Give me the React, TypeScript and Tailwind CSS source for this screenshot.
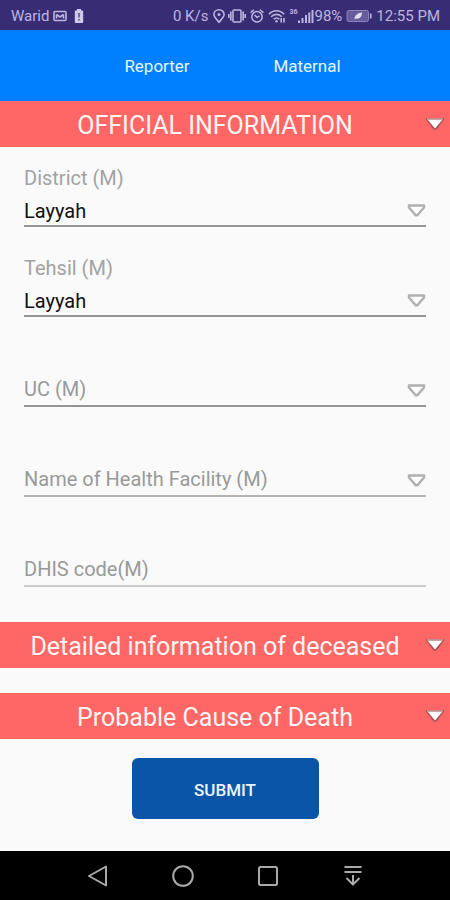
import type { ReactNode } from "react";

function StatusBar() {
  return (
    <header className="flex h-[30px] items-center justify-between bg-[#382d74] pl-[11px] pr-[10px] pt-0.5 text-[15px] leading-5 text-[#bdb5e0]">
      <div className="flex items-center">
        <span>Warid</span>
        <svg className="ml-1 h-3 w-3.5" viewBox="0 0 14 12" fill="none" stroke="currentColor" strokeWidth="1.6">
          <rect x="1" y="1.5" width="12" height="9" rx="1" />
          <path d="M3.5 8.5V4.500M10.500 8.500V4.500M3.500 4.500 7 7l3.500-2.500" />
        </svg>
        <svg className="ml-[7px] h-3.5 w-2.5" viewBox="0 0 10 14">
          <path d="M3 0h4v1.500h1.200a1 1 0 0 1 1 1V13a1 1 0 0 1-1 1H1.800a1 1 0 0 1-1-1V2.500a1 1 0 0 1 1-1H3z" fill="#cfc9ea" />
          <path d="M5 4v4.500M5 10v1.600" stroke="#5b5191" strokeWidth="1.6" />
        </svg>
      </div>
      <div className="flex items-center">
        <span>0 K/s</span>
        <svg className="ml-1 h-3.5 w-3.5" viewBox="0 0 14 14" fill="none" stroke="currentColor" strokeWidth="1.6">
          <path d="M7 13.200C4.500 10.300 1.900 8 1.900 5.500a5.100 4.700 0 0 1 10.200 0C12.100 8 9.500 10.300 7 13.200z" />
          <circle cx="7" cy="5.600" r="1.500" fill="currentColor" stroke="none" />
        </svg>
        <svg className="ml-0.5 h-3.5 w-[18px]" viewBox="0 0 18 14" fill="none" stroke="currentColor" strokeWidth="1.6">
          <rect x="5" y="1" width="8" height="12" rx="1" />
          <path d="M2.800 2.500v9M15.200 2.500v9M.8 5v4M17.200 5v4" />
        </svg>
        <svg className="ml-1 h-3.5 w-3.5" viewBox="0 0 14 14" fill="none" stroke="currentColor" strokeWidth="1.5">
          <circle cx="7" cy="7.800" r="5.200" />
          <path d="M.6 3.600 3.900.8M13.400 3.600 10.100.8M4.600 6 7 8.300l2.500-1.500" />
        </svg>
        <svg className="ml-1 h-3.5 w-[18px]" viewBox="0 0 18 14" fill="none" stroke="currentColor" strokeWidth="1.6">
          <path d="M1 5.200C5 .6 12 .6 16 5.200M3.200 7.800c3-3.300 7.600-3.300 10.600 0M5.600 10.300c1.800-1.800 4-1.800 5.800 0" />
          <circle cx="8.500" cy="12.300" r="1.200" fill="currentColor" stroke="none" />
          <path d="M13.200 9v4.500M16 9v4.500" />
        </svg>
        <span className="ml-[3px] self-start text-[7px] font-bold leading-3">36</span>
        <svg className="h-3.5 w-4" viewBox="0 0 16 14" fill="currentColor">
          <path d="M0 11.500h2V14H0zM3.500 9h2v5h-2zM7 6h2v8H7zM10.300 3.500h2V14h-2zM13.500 1h2v13h-2z" />
        </svg>
        <span className="ml-px">98%</span>
        <svg className="ml-1 h-3.5 w-[26px]" viewBox="0 0 26 14">
          <rect x="1" y="1.500" width="21.500" height="11" rx="2" fill="#665c9b" stroke="#8d84bb" />
          <path d="M24 4.500h1.500v5H24z" fill="#bdb5e0" />
          <path d="M8.500 10.500c0-4 2.500-6.500 7.500-7-.2 4.500-2.500 7-6 6z" fill="#e2deef" />
        </svg>
        <span className="ml-1">12:55 PM</span>
      </div>
    </header>
  );
}

function SectionHeader({ children }: { children: ReactNode }) {
  return (
    <h2>
      <button type="button" className="flex h-[46px] w-full items-center bg-[#ff6766] pl-1 pr-1.5 text-[25px] leading-8 text-[#fff5f2]">
        <span className="flex-1 pt-1 text-center">{children}</span>
        <svg className="h-3.5 w-[18px] shrink-0" viewBox="0 0 18 14">
          <path d="M0 1h18v1.500l-7 9.500q-2 2-4 0L0 2.500z" fill="#a65453" />
          <path d="M1.500 2.500h15L9 11.500z" fill="#fff" />
          <path d="M1 2h16" stroke="#c9a09c" strokeWidth="1.500" />
        </svg>
      </button>
    </h2>
  );
}

const lineColors = {
  strong: "border-[#949494]",
  medium: "border-[#b4b4b4]",
  light: "border-[#cbcbcb]",
};

type FieldProps = { id: string; label: string; value?: string; line?: keyof typeof lineColors };

function SelectField({ id, label, value = "", line = "strong" }: FieldProps) {
  const filled = value !== "";
  return (
    <div className="grid grid-cols-1 grid-rows-[24px_37px]">
      <label
        htmlFor={id}
        className={
          filled
            ? "row-start-1 col-start-1 text-xl leading-6 text-[#a2a2a2]"
            : "pointer-events-none z-10 row-start-2 col-start-1 pt-[7px] text-xl leading-6 text-[#999999]"
        }
      >
        {label}
      </label>
      <select
        id={id}
        defaultValue={value}
        className={`row-start-2 col-start-1 w-full appearance-none border-b-2 bg-transparent pb-0.5 pt-2 text-xl leading-6 text-[#111111] outline-none ${lineColors[line]}`}
      >
        <option value={value}>{value}</option>
      </select>
      <svg className="pointer-events-none row-start-2 col-start-1 mt-[13px] h-3.5 w-5 justify-self-end" viewBox="0 0 20 14" fill="#fff" stroke="#b0b0b0" strokeWidth="2.500" strokeLinejoin="round">
        <path d="M3 2.500h15v2l-6 7q-1.500 1.500-3 0L3 4.500z" />
      </svg>
    </div>
  );
}

function TextField({ id, label, line = "light" }: FieldProps) {
  return (
    <div className="grid grid-cols-1 grid-rows-[24px_37px]">
      <label htmlFor={id} className="pointer-events-none z-10 row-start-2 col-start-1 pt-[7px] text-xl leading-6 text-[#999999]">
        {label}
      </label>
      <input
        id={id}
        type="text"
        className={`row-start-2 col-start-1 w-full border-b-2 bg-transparent text-xl leading-6 text-[#111111] outline-none ${lineColors[line]}`}
      />
    </div>
  );
}

function NavButton({ name, children }: { name: string; children: ReactNode }) {
  return (
    <button type="button" aria-label={name} className="flex w-[85px] items-center justify-center">
      <svg className="h-6 w-6" viewBox="0 0 24 24" fill="none" stroke="#aaaaaa" strokeWidth="2" strokeLinejoin="round">
        {children}
      </svg>
    </button>
  );
}

export default function App() {
  return (
    <div className="flex min-h-screen flex-col bg-[#fafafa] font-[Roboto,'Liberation_Sans',sans-serif]">
      <StatusBar />
      <nav className="flex h-[71px] items-center justify-center bg-[#0080ff] pl-3.5 text-[17px] leading-6 text-[#e4f6ff]">
        <button type="button" className="w-[150px]">Reporter</button>
        <button type="button" className="w-[150px]">Maternal</button>
      </nav>
      <main className="flex-1">
        <form onSubmit={(event) => event.preventDefault()}>
          <SectionHeader>OFFICIAL INFORMATION</SectionHeader>
          <div className="flex flex-col gap-[29px] px-6 pb-[35px] pt-[19px]">
            <SelectField id="district" label="District (M)" value="Layyah" />
            <SelectField id="tehsil" label="Tehsil (M)" value="Layyah" />
            <SelectField id="uc" label="UC (M)" />
            <SelectField id="facility" label="Name of Health Facility (M)" line="medium" />
            <TextField id="dhis" label="DHIS code(M)" />
          </div>
          <div className="flex flex-col gap-[25px]">
            <SectionHeader>Detailed information of deceased</SectionHeader>
            <SectionHeader>Probable Cause of Death</SectionHeader>
          </div>
          <div className="flex justify-center pb-8 pt-[19px]">
            <button type="submit" className="h-[61px] w-[187px] rounded-md bg-[#0b55a8] pt-0.5 text-[17px] font-medium leading-6 text-[#eef6ff]">
              SUBMIT
            </button>
          </div>
        </form>
      </main>
      <footer className="flex h-[49px] justify-center bg-black">
        <NavButton name="Back">
          <path d="M3 12 20 2.500v19z" />
        </NavButton>
        <NavButton name="Home">
          <circle cx="12" cy="12" r="9.800" />
        </NavButton>
        <NavButton name="Recent apps">
          <rect x="3" y="3" width="18" height="18" rx="1.500" />
        </NavButton>
        <NavButton name="Notifications">
          <path d="M3.500 3h17M3.500 8h17M12 11v9.500M5.500 14l6.500 6.500 6.500-6.500" />
        </NavButton>
      </footer>
    </div>
  );
}
